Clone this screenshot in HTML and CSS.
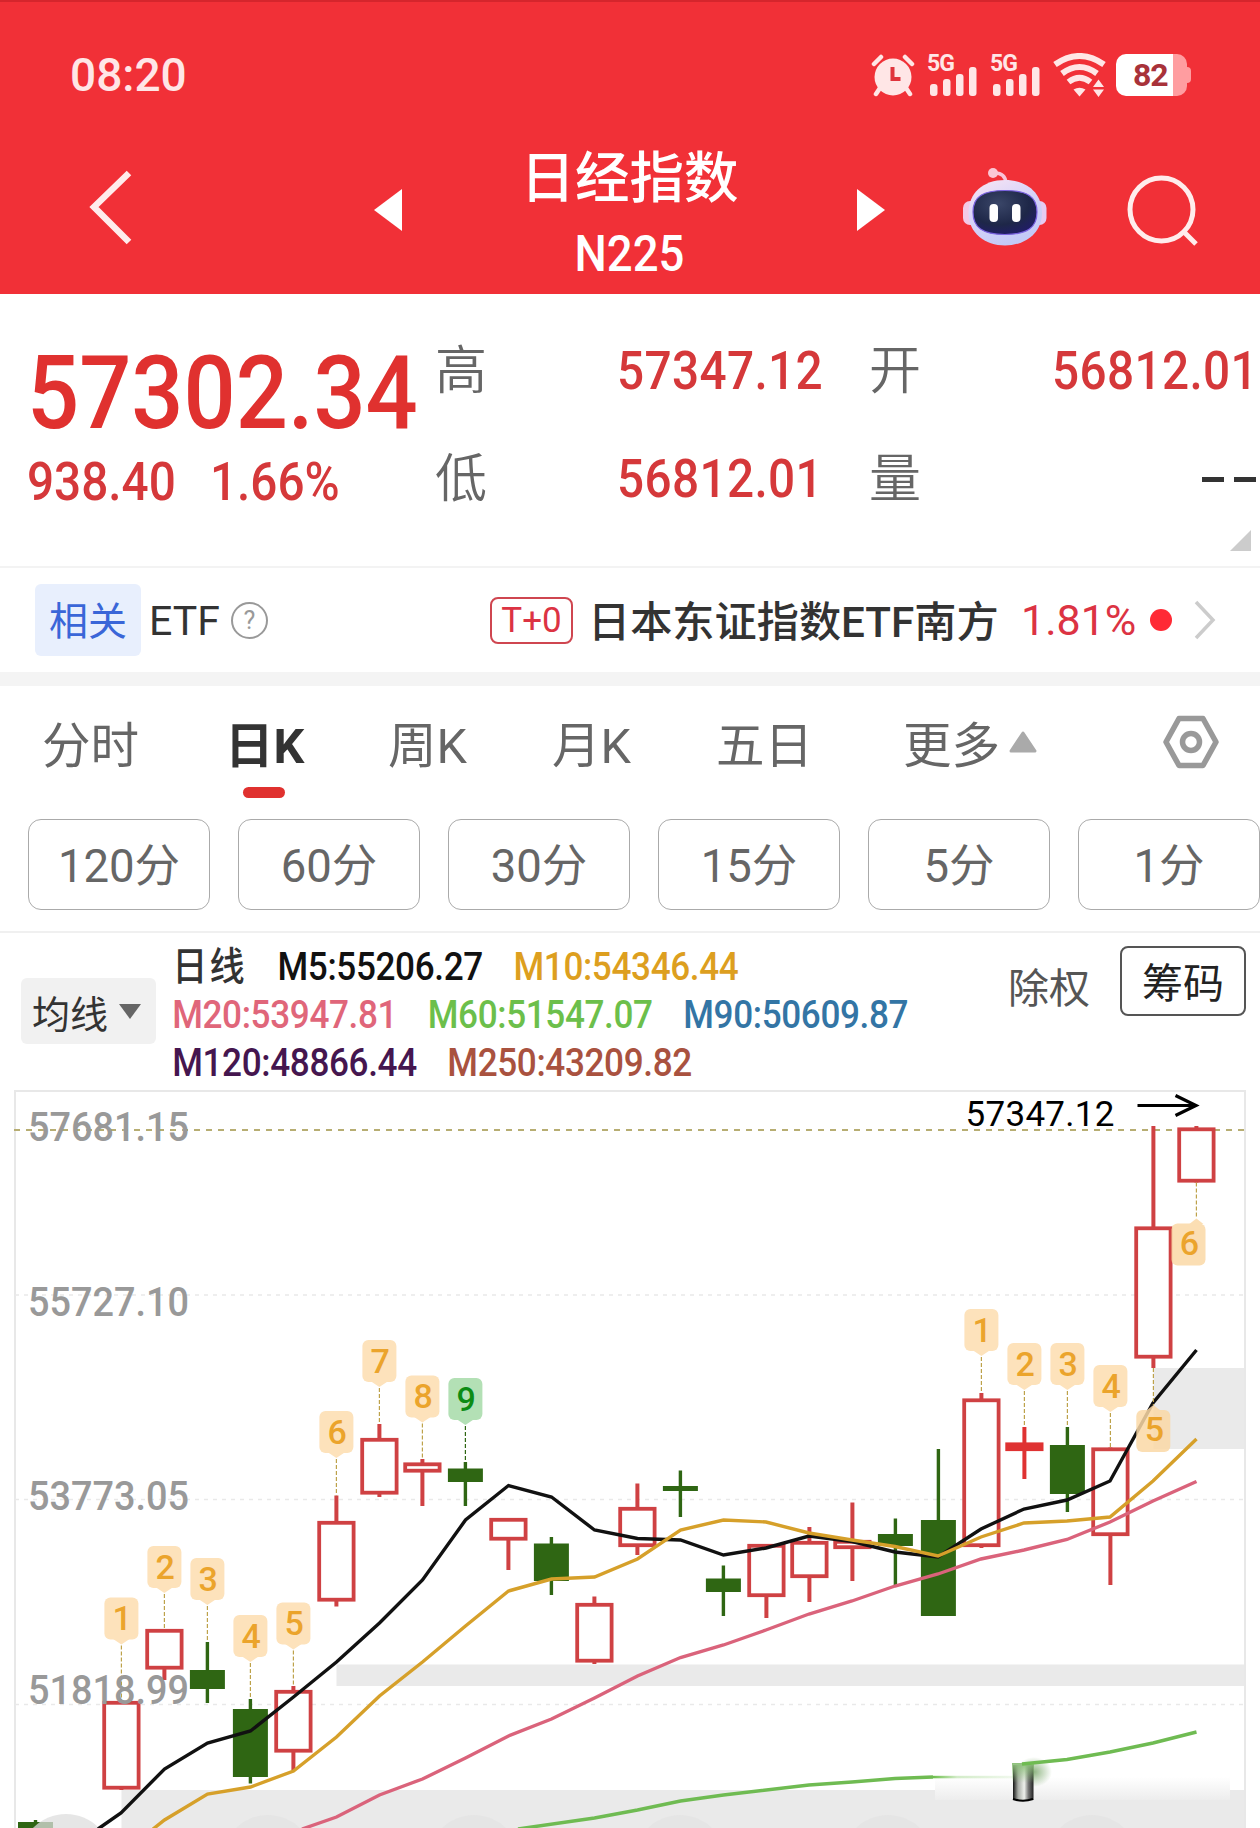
FILE: index.html
```
<!DOCTYPE html>
<html lang="zh-CN">
<head>
    <meta charset="UTF-8">
    <meta name="viewport" content="width=device-width, initial-scale=1.0">
    <title>日经指数 N225</title>
    <link rel="stylesheet" href="styles.css">
</head>
<body>
    <header class="header">
        <div class="status-bar">
            <span class="clock">08:20</span>
            <div class="status-icons">
                <svg class="icon-alarm" width="44" height="44" viewBox="0 0 44 44">
                    <g stroke="#ffe6e6" stroke-width="4.5" stroke-linecap="round">
                        <path d="M3 11l7-7M41 11l-7-7M9 35l-4 6M35 35l4 6"/>
                    </g>
                    <circle cx="22" cy="24" r="18.5" fill="#ffe6e6"/>
                    <path d="M21.5 14v12h8" fill="none" stroke="#e0343c" stroke-width="4"/>
                </svg>
                <svg class="icon-signal" width="52" height="44" viewBox="0 0 52 44" fill="#ffe6e6">
                    <text x="0" y="18" class="signal-text">5G</text>
                    <rect x="3" y="31" width="7.5" height="12" rx="3"/>
                    <rect x="16" y="26" width="7.5" height="17" rx="3"/>
                    <rect x="29" y="21" width="7.5" height="22" rx="3"/>
                    <rect x="42" y="14" width="7.5" height="29" rx="3"/>
                </svg>
                <svg class="icon-signal" width="52" height="44" viewBox="0 0 52 44" fill="#ffe6e6">
                    <text x="0" y="18" class="signal-text">5G</text>
                    <rect x="3" y="31" width="7.5" height="12" rx="3"/>
                    <rect x="16" y="26" width="7.5" height="17" rx="3"/>
                    <rect x="29" y="21" width="7.5" height="22" rx="3"/>
                    <rect x="42" y="14" width="7.5" height="29" rx="3"/>
                </svg>
                <svg class="icon-wifi" width="54" height="44" viewBox="0 0 54 44">
                    <g fill="none" stroke="#ffe6e6" stroke-width="6">
                        <path d="M2 11.500q24.500-17 49 0"/>
                        <path d="M9 20.500q17.500-13 35 0"/>
                        <path d="M15.500 29q11-8.500 22 0"/>
                    </g>
                    <path d="M20.500 36.500q6-3.500 12 0l-6 7z" fill="#ffe6e6"/>
                    <path d="M40 34l5.500-7.500 5.500 7.500zM40 36.500h11l-5.500 7.500z" fill="#ffe6e6"/>
                </svg>
                <div class="battery"><span class="battery-level">82</span></div>
            </div>
        </div>
        <div class="nav-bar">
            <svg class="nav-back" width="44" height="76" viewBox="0 0 44 76">
                <path d="M41 4L6 38l35 35" fill="none" stroke="#ffecec" stroke-width="6.5"/>
            </svg>
            <svg class="nav-prev" width="28" height="44" viewBox="0 0 28 44"><path d="M0 22L28 1v42z" fill="#fff"/></svg>
            <div class="nav-title">
                <div class="stock-name">日经指数</div>
                <div class="stock-code">N225</div>
            </div>
            <svg class="nav-next" width="28" height="44" viewBox="0 0 28 44"><path d="M28 22L0 1v42z" fill="#fff"/></svg>
            <svg class="nav-robot" width="86" height="82" viewBox="0 0 86 82">
                <defs>
                    <linearGradient id="headFill" x1="0" y1="0" x2="0.5" y2="1">
                        <stop offset="0" stop-color="#fbe6f4"/>
                        <stop offset="0.5" stop-color="#d8d4f8"/>
                        <stop offset="1" stop-color="#c3c9f6"/>
                    </linearGradient>
                    <radialGradient id="faceFill" cx="0.4" cy="0.3" r="0.8">
                        <stop offset="0" stop-color="#3a4668"/>
                        <stop offset="0.6" stop-color="#1e2748"/>
                        <stop offset="1" stop-color="#211a6c"/>
                    </radialGradient>
                </defs>
                <path d="M31 8q12-1 13 10" fill="none" stroke="#f9c4d8" stroke-width="3.500"/>
                <circle cx="31" cy="8" r="5" fill="#fbc6d4"/>
                <rect x="1" y="36" width="16" height="24" rx="7" fill="#f3c9e6"/>
                <rect x="68.500" y="36" width="16" height="24" rx="7" fill="#e6ccf2"/>
                <path d="M43 15c22 0 37 13 37 33s-17 32.500-37 32.500S6.500 68 6.500 48s14.500-33 36.500-33z" fill="url(#headFill)"/>
                <path d="M43 25.500c22 0 32 6 32 21.500S65.500 69.500 43 69.500 11 62.500 11 47s10-21.500 32-21.500z" fill="url(#faceFill)" stroke="#7a62e0" stroke-width="1.200"/>
                <rect x="27.500" y="39" width="8.500" height="18" rx="4" fill="#fff"/>
                <rect x="50" y="39" width="8.500" height="18" rx="4" fill="#fff"/>
            </svg>
            <svg class="nav-search" width="72" height="72" viewBox="0 0 72 72" fill="none" stroke="#ffecec" stroke-width="5">
                <circle cx="34.500" cy="34.500" r="31.500"/>
                <path d="M56 56l13 13"/>
            </svg>
        </div>
    </header>

    <section class="quote">
        <div class="quote-main">
            <div class="price">57302.34</div>
            <div class="change"><span>938.40</span><span>1.66%</span></div>
        </div>
        <div class="quote-grid">
            <span class="q-label">高</span><span class="q-value">57347.12</span>
            <span class="q-label q-second">开</span><span class="q-value">56812.01</span>
            <span class="q-label">低</span><span class="q-value">56812.01</span>
            <span class="q-label q-second">量</span><span class="q-empty"><i></i><i></i></span>
        </div>
        <span class="corner"></span>
    </section>

    <section class="etf-row">
        <span class="tag">相关</span>
        <span class="etf-text">ETF</span>
        <span class="help">?</span>
        <span class="t0">T+0</span>
        <span class="etf-name">日本东证指数ETF南方</span>
        <span class="etf-change">1.81%</span>
        <span class="dot"></span>
        <svg width="22" height="40" viewBox="0 0 22 40"><path d="M2 2l17 18L2 38" fill="none" stroke="#ccc" stroke-width="3.5"/></svg>
    </section>

    <nav class="tabs">
        <span class="tab">分时</span>
        <span class="tab active">日K</span>
        <span class="tab">周K</span>
        <span class="tab">月K</span>
        <span class="tab">五日</span>
        <span class="tab more">更多<svg width="28" height="22" viewBox="0 0 28 22"><path d="M14 2L26 20H2z" fill="#aaa" stroke="#aaa" stroke-width="3" stroke-linejoin="round"/></svg></span>
        <svg class="settings" width="58" height="56" viewBox="0 0 58 56" fill="none" stroke="#999">
            <path d="M17 4.500h24L54 28 41 51.500H17L4 28z" stroke-width="5.500" stroke-linejoin="round"/>
            <circle cx="29" cy="28" r="8.500" stroke-width="5.500"/>
        </svg>
    </nav>
    <div class="periods">
        <button>120分</button>
        <button>60分</button>
        <button>30分</button>
        <button>15分</button>
        <button>5分</button>
        <button>1分</button>
    </div>

    <section class="ma-bar">
        <div class="ma-select">均线<svg width="22" height="15" viewBox="0 0 22 15"><path d="M0 0h22L11 15z" fill="#666"/></svg></div>
        <div class="ma-list">
            <div class="ma-line"><span class="ma-title">日线</span><span class="m5">M5:55206.27</span><span class="m10">M10:54346.44</span></div>
            <div class="ma-line"><span class="m20">M20:53947.81</span><span class="m60">M60:51547.07</span><span class="m90">M90:50609.87</span></div>
            <div class="ma-line"><span class="m120">M120:48866.44</span><span class="m250">M250:43209.82</span></div>
        </div>
        <div class="ma-actions">
            <span class="ex-right">除权</span>
            <span class="chips">筹码</span>
        </div>
    </section>

    <svg id="chart" class="chart" width="1260" height="742" viewBox="0 1086 1260 742">
        <defs>
            <linearGradient id="tube" x1="0" y1="0" x2="1" y2="0">
                <stop offset="0" stop-color="#111"/>
                <stop offset="0.25" stop-color="#a8aca6"/>
                <stop offset="0.55" stop-color="#eef0ec"/>
                <stop offset="0.75" stop-color="#777"/>
                <stop offset="1" stop-color="#222"/>
            </linearGradient>
            <linearGradient id="tubeTop" x1="0" y1="0" x2="0" y2="1">
                <stop offset="0" stop-color="#8cc07a"/>
                <stop offset="1" stop-color="#8cc07a" stop-opacity="0"/>
            </linearGradient>
            <linearGradient id="haze" x1="0" y1="0" x2="0" y2="1">
                <stop offset="0" stop-color="#fff"/>
                <stop offset="1" stop-color="#ededed"/>
            </linearGradient>
            <radialGradient id="glow">
                <stop offset="0" stop-color="#76a566" stop-opacity="0.8"/>
                <stop offset="1" stop-color="#76a566" stop-opacity="0"/>
            </radialGradient>
            <linearGradient id="fade" x1="0" y1="0" x2="1" y2="0">
                <stop offset="0" stop-color="#6cbf4b"/>
                <stop offset="0.3" stop-color="#6cbf4b" stop-opacity="0.3"/>
                <stop offset="1" stop-color="#6cbf4b" stop-opacity="0.1"/>
            </linearGradient>
        </defs>
    </svg>

    <script src="chart.js"></script>
</body>
</html>
```
FILE: styles.css
```
* {
    box-sizing: border-box;
}
body {
    margin: 0;
    width: 1260px;
    height: 1828px;
    overflow: hidden;
    background: #fff;
    color: #333;
    font-family: Roboto, "Noto Sans CJK SC", sans-serif;
}
svg {
    display: block;
    flex: none;
}

/* header */
.header {
    height: 294px;
    background: #f13037;
    border-top: 2px solid #d5252c;
    color: #fff;
}
.status-bar {
    display: flex;
    justify-content: space-between;
    align-items: center;
    height: 148px;
    padding: 0 69px 2px 70px;
}
.clock {
    font-size: 46px;
    font-weight: 500;
    color: #ffe6e6;
}
.status-icons {
    display: flex;
    align-items: center;
}
.icon-alarm {
    margin-right: 12px;
}
.icon-signal {
    margin-right: 11px;
    overflow: visible;
}
.icon-wifi {
    margin-right: 9px;
}
.signal-text {
    font-size: 23px;
    font-weight: 700;
    letter-spacing: -1px;
}
.battery {
    position: relative;
    width: 71px;
    height: 42px;
    border-radius: 10px;
    background: linear-gradient(to right, #fff 57px, #ff9da0 57px);
    margin-right: 4px;
}
.battery::after {
    content: "";
    position: absolute;
    right: -4px;
    top: 13px;
    width: 4px;
    height: 16px;
    border-radius: 0 4px 4px 0;
    background: #ff9da0;
}
.battery-level {
    display: block;
    padding-left: 17px;
    line-height: 42px;
    font-size: 32px;
    font-weight: 700;
    letter-spacing: -1px;
    color: #a8323a;
}
.nav-bar {
    display: flex;
    align-items: flex-start;
    height: 144px;
    margin-top: -14px;
    padding-left: 88px;
}
.nav-back {
    margin-top: 33px;
}
.nav-prev {
    margin: 52px 0 0 242px;
}
.nav-title {
    width: 455px;
    text-align: center;
    padding-top: 10px;
}
.stock-name {
    font-size: 54.5px;
    font-weight: 500;
    line-height: 64px;
}
.stock-code {
    font-size: 50px;
    font-weight: 500;
    line-height: 50px;
    margin-top: 19px;
    transform: scaleX(0.91);
}
.nav-next {
    margin-top: 52px;
}
.nav-robot {
    margin: 29px 0 0 77px;
}
.nav-search {
    margin: 39px 0 0 79px;
}

/* quote */
.quote {
    position: relative;
    display: flex;
    height: 274px;
    border-bottom: 2px solid #f3f3f3;
    color: #e0312f;
}
.quote-main {
    width: 435px;
    padding: 48px 0 0 27px;
}
/* narrow digits */
.price,
.change,
.ma-list {
    transform: scaleX(0.9);
    transform-origin: left;
}
.price {
    font-size: 102px;
    font-weight: 500;
    line-height: 102px;
}
.change {
    display: flex;
    gap: 38px;
    margin-top: 8px;
    font-size: 53px;
    font-weight: 500;
    line-height: 60px;
    color: #d5383a;
}
.quote-grid {
    display: grid;
    grid-template-columns: 60px 328px 60px 375px;
    grid-template-rows: 108px 108px;
    padding-top: 23px;
    align-items: center;
}
.q-label {
    padding-bottom: 9px;
    font-size: 52px;
    color: #666;
    font-weight: 350;
}
.q-second {
    padding-left: 46px;
    width: 100px;
}
.q-value {
    font-size: 53px;
    font-weight: 500;
    letter-spacing: 0.4px;
    text-align: right;
    color: #d5383a;
    transform: scaleX(0.9);
    transform-origin: right;
}
.q-empty {
    display: flex;
    justify-content: flex-end;
    gap: 10px;
    padding-right: 2px;
}
.q-empty i {
    width: 22px;
    height: 5px;
    background: #333;
}
.corner {
    position: absolute;
    right: 9px;
    bottom: 15px;
    border-left: 21px solid transparent;
    border-bottom: 21px solid #ccc;
}

/* related etf */
.etf-row {
    display: flex;
    align-items: center;
    height: 118px;
    padding-left: 35px;
    border-bottom: 14px solid #f4f4f4;
}
.tag {
    width: 106px;
    height: 72px;
    line-height: 76px;
    border-radius: 6px;
    background: #e8effd;
    color: #3a66d8;
    font-size: 39px;
    text-align: center;
}
.etf-text {
    width: 81px;
    padding-left: 8px;
    font-size: 41px;
    line-height: 48px;
    padding-top: 2px;
}
.help {
    width: 37px;
    height: 37px;
    margin-left: 9px;
    border: 2px solid #999;
    border-radius: 50%;
    color: #999;
    font-size: 25px;
    line-height: 34px;
    text-align: center;
}
.t0 {
    width: 83px;
    height: 47px;
    margin-left: 222px;
    border: 2px solid #cf4650;
    border-radius: 8px;
    color: #dc3343;
    font-size: 35px;
    line-height: 43px;
    text-align: center;
}
.etf-name {
    width: 433px;
    padding: 5px 0 0 15px;
    font-size: 42.2px;
    font-weight: 500;
    line-height: 50px;
    white-space: nowrap;
}
.etf-change {
    width: 144px;
    padding-left: 15px;
    font-size: 43px;
    color: #dc3343;
    line-height: 50px;
}
.dot {
    width: 22px;
    height: 22px;
    margin-right: 22px;
    border-radius: 50%;
    background: #ff2a35;
}

/* tabs */
.tabs {
    display: grid;
    grid-template-columns: 183px 163px 164px 164px 187px 259px 60px;
    height: 133px;
    padding-left: 42px;
    align-items: start;
}
.tab {
    position: relative;
    padding-top: 33px;
    font-size: 48.5px;
    line-height: 56px;
    color: #666;
}
.tab.active {
    font-weight: 700;
    color: #333;
}
.tab.active::after {
    content: "";
    position: absolute;
    left: 18px;
    top: 101px;
    width: 42px;
    height: 11px;
    border-radius: 6px;
    background: #e0312f;
}
.more {
    display: flex;
}
.more svg {
    margin: 12px 0 0 9px;
}
.settings {
    margin-top: 28px;
}
.periods {
    display: flex;
    gap: 28px;
    height: 114px;
    padding-left: 28px;
    border-bottom: 2px solid #f0f0f0;
}
.periods button {
    flex: none;
    width: 182px;
    height: 91px;
    padding: 5px 0 0;
    border: 1.5px solid #aaa;
    border-radius: 13px;
    background: #fff;
    color: #666;
    font-family: inherit;
    font-size: 45.5px;
    line-height: 84px;
}

/* moving averages */
.ma-bar {
    display: flex;
    height: 153px;
    padding-left: 21px;
}
.ma-select {
    display: flex;
    align-items: center;
    width: 135px;
    height: 66px;
    margin-top: 45px;
    padding-left: 11px;
    border-radius: 6px;
    background: #f1f1f1;
    font-size: 38px;
}
.ma-select svg {
    margin-left: 11px;
}
.ma-list {
    width: 850px;
    padding: 10px 0 0 18px;
    font-size: 39px;
    line-height: 48px;
    font-weight: 500;
    letter-spacing: -0.4px;
}
.ma-line {
    display: flex;
    gap: 34px;
    height: 48px;
    white-space: nowrap;
}
.ma-title {
    font-size: 39px;
    letter-spacing: 2.5px;
}
.m5 {
    color: #111;
}
.m10 {
    color: #dd9f1f;
}
.m20 {
    color: #e0667a;
}
.m60 {
    color: #6cbf4b;
}
.m90 {
    color: #3375a5;
}
.m120 {
    color: #45164f;
}
.m250 {
    color: #a9523f;
}
.ma-actions {
    display: flex;
    font-size: 41px;
}
.ex-right {
    width: 114px;
    padding-top: 26px;
    padding-left: 2px;
    line-height: 60px;
    color: #555;
}
.chips {
    width: 126px;
    height: 70px;
    margin-top: 13px;
    border: 2px solid #555;
    border-radius: 8px;
    line-height: 73px;
    text-align: center;
    color: #222;
}

/* chart */
.axis-label {
    font-size: 41px;
    font-weight: 500;
    fill: #999;
}
.high-label {
    font-size: 35px;
    fill: #000;
}
.mark-text {
    font-size: 34px;
    font-weight: 500;
    text-anchor: middle;
}
```
FILE: chart.js
```
var chart = document.getElementById('chart');
var RED = '#cf4143';
var GREEN = '#2f6613';

// type, high, body top, body bottom, low
var candles = [
    ['r', 1700, 1701, 1789.5, 1790],
    ['r', 1629, 1629, 1669.5, 1680],
    ['g', 1642, 1670, 1689, 1703],
    ['g', 1699, 1709, 1777, 1783.5],
    ['r', 1686, 1690, 1752.5, 1770],
    ['r', 1495.5, 1521, 1601.5, 1606.5],
    ['r', 1424, 1438, 1494.5, 1497],
    ['r', 1459, 1462.5, 1472.5, 1506],
    ['g', 1462, 1468.5, 1482, 1506],
    ['r', 1518, 1518, 1540.5, 1570],
    ['g', 1537, 1543.5, 1581, 1595],
    ['r', 1596.5, 1603, 1662.5, 1664],
    ['r', 1483.5, 1507, 1547, 1555],
    ['g', 1470.5, 1486, 1491, 1517],
    ['g', 1565.5, 1578.5, 1592, 1616],
    ['r', 1544, 1544, 1597, 1618],
    ['r', 1527, 1541, 1578, 1602],
    ['r', 1502.5, 1540, 1549, 1581],
    ['g', 1518.5, 1534, 1546, 1586],
    ['g', 1449, 1520, 1616, 1616],
    ['r', 1393, 1398.5, 1547, 1548],
    ['f', 1427, 1442.5, 1451, 1479],
    ['g', 1427, 1445, 1494, 1512],
    ['r', 1447.5, 1447.5, 1536, 1585],
    ['r', 1126, 1226.5, 1358.5, 1368],
    ['r', 1126, 1127.5, 1182.5, 1182.5]
];

// candle index, digit, top of the box
var marks = [
    [0, 1, 1597.5], [1, 2, 1546], [2, 3, 1558], [3, 4, 1615], [4, 5, 1602.5],
    [5, 6, 1411], [6, 7, 1340], [7, 8, 1375.5], [8, 9, 1378],
    [20, 1, 1309], [21, 2, 1343], [22, 3, 1343], [23, 4, 1365]
];

var ma5 = '98,1829 121,1813 164.5,1769 207.5,1743 250.5,1731 293.5,1697 336.5,1662 379.5,1623 422.5,1580 465.5,1520 508.5,1485.5 551.5,1497 594.5,1530 637.5,1538.5 680.5,1540 723.5,1555 766,1548 809,1536 852,1541.5 895,1552 938,1557 981,1529 1024,1509 1067,1500 1110,1481 1153,1403 1196.5,1350';
var ma10 = '153,1829 164.5,1820 207.5,1794 250.5,1787 293.5,1771 336.5,1737 379.5,1696 422.5,1662 465.5,1626 508.5,1591 551.5,1579 594.5,1577 637.5,1559 680.5,1530 723.5,1520 766,1522 809,1533 852,1540 895,1546.5 938,1556 981,1537 1024,1523 1067,1521 1110,1517 1153,1481 1196.5,1439';
var ma20 = '302,1829 336.5,1817 379.5,1795 422.5,1779 465.5,1758 508.5,1736 551.5,1719 594.5,1698 637.5,1676 680.5,1657.5 723.5,1645 766,1630 809,1614 852,1601 895,1586 938,1574 981,1559 1024,1550 1067,1539.5 1110,1522 1153,1501 1196.5,1481.5';
var ma60a = '518,1829 594.5,1818 637.5,1810 680.5,1801 723.5,1795 809,1785 852,1782 895,1778.5 933,1777';
var ma60b = '1022,1764 1067,1759.5 1110,1752 1153,1743 1196.5,1732';

function xOf(i) {
    return 121.4 + i * 43;
}
function rect(x, y, w, h, attrs) {
    return '<rect x="' + x + '" y="' + y + '" width="' + w + '" height="' + h + '" ' + attrs + '/>';
}
function line(x1, y1, x2, y2, attrs) {
    return '<line x1="' + x1 + '" y1="' + y1 + '" x2="' + x2 + '" y2="' + y2 + '" ' + attrs + '/>';
}
function poly(points, color) {
    return '<polyline points="' + points + '" fill="none" stroke="' + color + '" stroke-width="3.4"/>';
}

function drawCandle(type, x, high, top, bottom, low) {
    if (type === 'g') {
        return rect(x - 1.7, high, 3.4, low - high, 'fill="' + GREEN + '"') +
            rect(x - 17.5, top, 35, bottom - top, 'fill="' + GREEN + '"');
    }
    var color = type === 'f' ? '#df3232' : RED;
    return rect(x - 2, high, 4, low - high, 'fill="' + color + '"') +
        rect(x - 17.2, top + 1.8, 34.4, bottom - top - 3.6,
            'fill="' + (type === 'f' ? color : '#fff') + '" stroke="' + color + '" stroke-width="3.8"');
}

function drawMark(x, n, y, high) {
    var green = n === 9;
    var fill = green ? '#b3e0b5' : '#fde2bb';
    var color = green ? '#0d8c14' : '#eba42c';
    return line(x, y + 48, x, high, 'stroke="' + (green ? GREEN : '#bda24a') + '" stroke-width="1.2" stroke-dasharray="4 2"') +
        rect(x - 17, y, 34, 42, 'rx="6" fill="' + fill + '"') +
        '<path d="M' + (x - 9) + ' ' + (y + 41) + 'L' + x + ' ' + (y + 47) + 'L' + (x + 9) + ' ' + (y + 41) + 'z" fill="' + fill + '"/>' +
        '<text class="mark-text" x="' + (x + 0.7) + '" y="' + (y + 32.5) + '" fill="' + color + '">' + n + '</text>';
}

// mark under a candle, pointing up
function drawMarkUp(x, boxX, n, y, low) {
    return line(x, low, x, y - 5, 'stroke="#bda24a" stroke-width="1.2" stroke-dasharray="4 2"') +
        '<g opacity="0.85">' + rect(boxX, y, 34, 42, 'rx="6" fill="#fbd9a6"') +
        '<path d="M' + (x - 7) + ' ' + (y + 0.5) + 'L' + x + ' ' + (y - 5) + 'L' + (x + 7) + ' ' + (y + 0.5) + 'z" fill="#fbd9a6"/></g>' +
        '<text class="mark-text" x="' + (boxX + 18) + '" y="' + (y + 31) + '" fill="#eba42c">' + n + '</text>';
}

var html = '';

// gap bands
html += rect(1153.5, 1368, 92.5, 81, 'fill="#eaeaea"');
html += rect(336.5, 1664.5, 909.5, 21.5, 'fill="#eaeaea"');
html += rect(121.5, 1790, 1124.5, 40, 'fill="#eaeaea"');

// frame and grid
html += line(14, 1091, 1246, 1091, 'stroke="#e8e8e8" stroke-width="2"');
html += line(15, 1091, 15, 1828, 'stroke="#e8e8e8" stroke-width="2"');
html += line(1245, 1091, 1245, 1828, 'stroke="#e8e8e8" stroke-width="2"');
[1295, 1499.5, 1704.5].forEach(function (y) {
    html += line(15, y, 1245, y, 'stroke="#e9e9e9" stroke-width="1.6" stroke-dasharray="4 5"');
});
html += line(14, 1130, 1245, 1130, 'stroke="#b7ad72" stroke-width="2" stroke-dasharray="6 6"');

// first candle is cut by the bottom edge
html += rect(18, 1822, 35, 8, 'fill="' + GREEN + '"') + rect(33.8, 1820, 3.4, 4, 'fill="' + GREEN + '"');
html += '<circle cx="66" cy="1860" r="46" fill="#dedede" opacity="0.75"/>';
[268, 474, 680, 888, 1092].forEach(function (cx) {
    html += '<circle cx="' + cx + '" cy="1861" r="46" fill="#e5e5e5"/>';
});

candles.forEach(function (c, i) {
    html += drawCandle(c[0], xOf(i), c[1], c[2], c[3], c[4]);
});

html += poly(ma5, '#111');
html += drawMarkUp(xOf(24), 1136.3, 5, 1410, 1368);
html += poly(ma10, '#d6a02a');
html += poly(ma20, '#da637b');
html += poly(ma60a, '#6fbb52');

// blurred strip over the lower right corner
html += rect(935, 1777, 295, 23, 'fill="url(#haze)"');
html += rect(933, 1775.8, 80, 2.5, 'fill="url(#fade)"');
html += '<ellipse cx="1034" cy="1772" rx="18" ry="15" fill="url(#glow)"/>';
html += rect(1013, 1765, 20.5, 35, 'fill="url(#tube)"');
html += rect(1012, 1763, 22, 20, 'fill="url(#tubeTop)"');
html += '<path d="M1013 1799q10 3.500 20 0" fill="none" stroke="#000" stroke-width="2.2"/>';
html += poly(ma60b, '#6fbb52');

marks.forEach(function (m) {
    html += drawMark(xOf(m[0]), m[1], m[2], candles[m[0]][1]);
});
html += drawMarkUp(xOf(25), 1171.5, 6, 1223.5, 1182.5);

[[1141, '57681.15'], [1316, '55727.10'], [1510, '53773.05'], [1704, '51818.99']].forEach(function (l) {
    html += '<text class="axis-label" x="28" y="' + l[0] + '" textLength="161" lengthAdjust="spacingAndGlyphs">' + l[1] + '</text>';
});
html += '<text class="high-label" x="965.5" y="1126" textLength="149">57347.12</text>';
html += '<path d="M1137.500 1105.500H1195M1175.500 1095.500l20.500 10-20.500 10" fill="none" stroke="#000" stroke-width="3.2"/>';

chart.insertAdjacentHTML('beforeend', html);
```
